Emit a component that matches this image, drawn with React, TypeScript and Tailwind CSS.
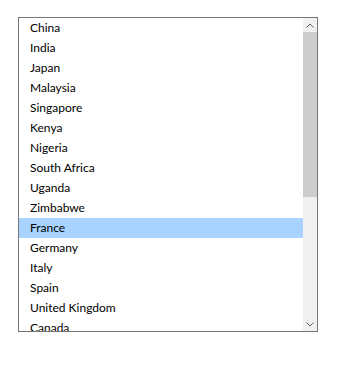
const countries = [
  "China",
  "India",
  "Japan",
  "Malaysia",
  "Singapore",
  "Kenya",
  "Nigeria",
  "South Africa",
  "Uganda",
  "Zimbabwe",
  "France",
  "Germany",
  "Italy",
  "Spain",
  "United Kingdom",
  "Canada",
  "Mexico",
  "United States",
  "Argentina",
  "Brazil",
  "Chile",
  "Colombia",
  "Peru",
  "Australia",
  "New Zealand",
  "Fiji",
  "Samoa",
];

const selected = "France";

function Chevron({ up }: { up?: boolean }) {
  return (
    <svg width="8" height="5" viewBox="0 0 8 5" className="block">
      <path
        d={up ? "M0.5 4.5 L4 1 L7.5 4.5" : "M0.5 0.5 L4 4 L7.5 0.5"}
        fill="none"
        stroke="#606060"
        strokeWidth="1"
      />
    </svg>
  );
}

export default function App() {
  return (
    <div className="pl-[18px] pt-[17px]">
      <div className="flex h-[315px] w-[300px] border border-[#767676] bg-white font-['Lato',sans-serif] text-[12px] text-black">
        <ul className="flex-1 overflow-hidden">
          {countries.map((c) => (
            <li
              key={c}
              className={`flex h-5 shrink-0 items-center pl-[11px] ${c === selected ? "bg-[#a8d3fe]" : ""}`}
            >
              {c}
            </li>
          ))}
        </ul>
        <div className="flex w-[14px] flex-col bg-[#f0f0f0]">
          <div className="flex h-[14px] items-center justify-center">
            <Chevron up />
          </div>
          <div className="flex-1">
            <div className="h-[165px] bg-[#cdcdcd]" />
          </div>
          <div className="flex h-[14px] items-center justify-center">
            <Chevron />
          </div>
        </div>
      </div>
    </div>
  );
}
